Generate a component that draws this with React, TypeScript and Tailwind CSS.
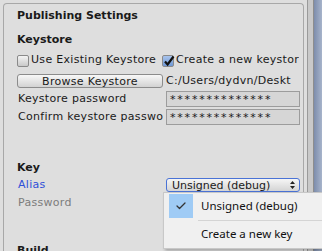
import { Check } from "lucide-react";

const ui = "font-['DejaVu_Sans',sans-serif] text-[11px] tracking-[0.3px] text-[#1a1a1a]";

function Box({ checked }: { checked?: boolean }) {
  return (
    <span
      className={
        "relative flex h-[12px] w-[12px] shrink-0 items-center justify-center rounded-[2px] border border-[#8a8a8a] " +
        (checked ? "bg-gradient-to-b from-[#a9c4ec] to-[#6f98d6]" : "bg-gradient-to-b from-[#f4f4f4] to-[#c9c9c9]")
      }
    >
      {checked && (
        <svg viewBox="0 0 12 12" className="absolute left-[0px] top-[-1px] h-[12px] w-[12px]">
          <path d="M2 6.5 L4.6 9.5 L10.5 1.5" fill="none" stroke="#111" strokeWidth="2.2" />
        </svg>
      )}
    </span>
  );
}

function Field({ value }: { value: string }) {
  return (
    <div className="flex h-[16px] w-[134px] items-center border border-[#9c9c9c] bg-[#d6d6d6] pl-[3px] leading-none tracking-[1.8px]">
      {value}
    </div>
  );
}

export default function App() {
  return (
    <div className={"relative flex h-[251px] w-[322px] overflow-hidden bg-[#dedede] " + ui}>
      <div className="ml-[3px] mt-[3px] flex w-[301px] flex-col rounded-t-[4px] border border-b-0 border-[#a8a8a8] bg-[#dedede] pl-[13px] pt-[4px]">
        <div className="h-[16px] font-bold leading-[16px] tracking-normal">Publishing Settings</div>
        <div className="mt-[8px] h-[16px] font-bold leading-[16px] tracking-normal">Keystore</div>

        <div className="mt-[6px] flex h-[13px] items-center">
          <div className="flex w-[145px] items-center gap-[2px]">
            <Box />
            <span className="whitespace-nowrap">Use Existing Keystore</span>
          </div>
          <div className="flex min-w-0 items-center gap-[2px] overflow-hidden">
            <Box checked />
            <span className="whitespace-nowrap">Create a new keystor</span>
          </div>
        </div>

        <div className="mt-[7px] flex h-[14px] items-center">
          <button className="mr-[3px] flex h-[14px] w-[146px] shrink-0 items-center justify-center rounded-[3px] border border-[#8c8c8c] bg-gradient-to-b from-[#f8f8f8] to-[#d2d2d2] leading-none">
            Browse Keystore
          </button>
          <span className="overflow-hidden whitespace-nowrap">C:/Users/dydvn/Deskt</span>
        </div>

        <div className="mt-[3px] flex h-[16px] items-center">
          <span className="w-[149px] shrink-0 overflow-hidden whitespace-nowrap pl-[1px]">Keystore password</span>
          <Field value="**************" />
        </div>
        <div className="mt-[2px] flex h-[16px] items-center">
          <span className="w-[149px] shrink-0 overflow-hidden whitespace-nowrap pl-[1px]">Confirm keystore passwo</span>
          <Field value="**************" />
        </div>

        <div className="mt-[35px] h-[16px] font-bold leading-[16px] tracking-normal">Key</div>

        <div className="mt-[2px] flex h-[14px] items-center">
          <span className="w-[149px] shrink-0 pl-[1px] text-[#2f4fd8]">Alias</span>
          <div className="flex h-[14px] w-[134px] items-center justify-between rounded-[3px] border border-[#4a73d6] bg-gradient-to-b from-[#f6f6f6] to-[#d4d4d4] pl-[5px] pr-[4px] leading-none tracking-normal">
            <span>Unsigned (debug)</span>
            <svg viewBox="0 0 5 8" className="h-[8px] w-[5px]">
              <path d="M2.5 0 L5 3 H0 Z M2.5 8 L5 5 H0 Z" fill="#222" />
            </svg>
          </div>
        </div>
        <div className="mt-[4px] flex h-[14px] items-center pl-[1px] text-[#7c7c7c]">Password</div>

        <div className="mt-[33px] h-[16px] font-bold leading-[16px] tracking-normal">Build</div>
      </div>

      <div className="flex h-full shrink-0">
        <div className="w-[3px] bg-[#dedede]" />
        <div className="w-[1px] bg-[#9a9a9a]" />
        <div className="w-[5px] bg-[#c9c9c9]" />
        <div className="w-[1px] bg-[#8d8d8d]" />
        <div className="w-[8px] bg-gradient-to-r from-[#7d8dac] to-[#a7b4cb]" />
      </div>

      <div className="absolute left-[163px] top-[192px] h-[57px] w-[170px] border border-[#c8c8c8] bg-[#f0f0f0] font-['Noto_Sans',sans-serif] text-[11.5px] tracking-normal text-[#111] shadow-[2px_2px_3px_rgba(0,0,0,0.25)]">
        <div className="flex h-[26px] items-center">
          <div className="ml-[5px] flex h-[24px] w-[24px] items-center justify-center bg-[#9fcbf5]">
            <Check className="h-[12px] w-[12px]" strokeWidth={2.5} color="#333" />
          </div>
          <span className="ml-[8px]">Unsigned (debug)</span>
        </div>
        <div className="ml-[34px] mt-[1px] h-[1px] bg-[#d4d4d4]" />
        <div className="flex h-[26px] items-center pl-[37px]">Create a new key</div>
      </div>
    </div>
  );
}
